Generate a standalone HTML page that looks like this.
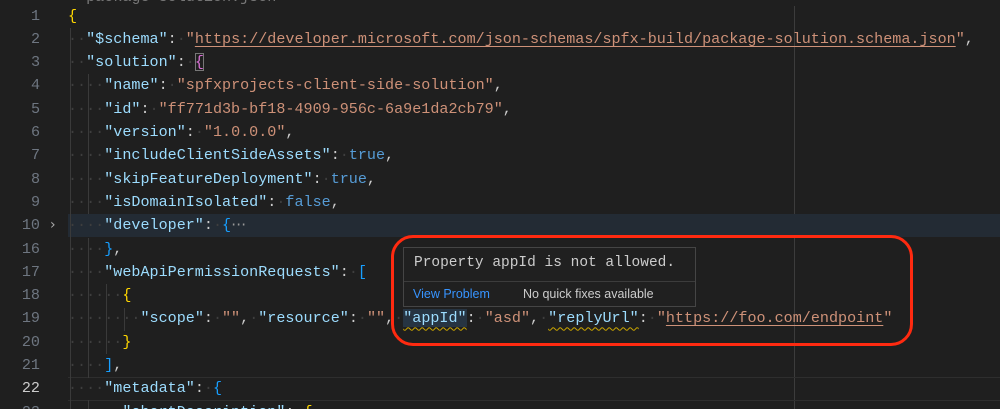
<!DOCTYPE html>
<html><head><meta charset="utf-8"><style>
html,body{margin:0;padding:0;background:#1f1f1f;width:1000px;height:409px;overflow:hidden}
body{position:relative;font-family:"Liberation Mono",monospace;font-size:15.1px}
.r{position:absolute;left:0;width:1000px;height:23.3px;line-height:23.3px}
.n{position:absolute;left:0;width:40px;text-align:right;color:#6e7681}
.c{position:absolute;left:68px;white-space:pre;color:#cccccc}
.k{color:#9cdcfe}.s{color:#ce9178}.b{color:#569cd6}
.g{color:#ffd700}.m{color:#da70d6}.bl{color:#179fff}
.w{color:#3e3e3e}
.u{text-decoration:underline;text-decoration-color:#ce9178;text-underline-offset:3px}
.sq{text-decoration:underline wavy #cca700;text-underline-offset:4px;text-decoration-thickness:1px}
.guide{position:absolute;width:1px;background:#3a3a3a}
</style></head><body>
<div class="r" style="top:-14px"><span class="c" style="color:#777">  package-solution.json</span></div>
<div style="position:absolute;left:794px;top:6px;width:1px;height:403px;background:#3c3c3c"></div>
<div style="position:absolute;left:68px;top:214px;width:932px;height:23.3px;background:#232b34"></div>
<div style="position:absolute;left:68px;top:377px;width:932px;height:22px;border-top:1px solid #2e2e2e;border-bottom:1px solid #2e2e2e"></div>
<div class="guide" style="left:70px;top:28px;height:381px"></div>
<div class="guide" style="left:88px;top:74px;height:140px"></div>
<div class="guide" style="left:88px;top:238px;height:140px"></div>
<div class="guide" style="left:88px;top:400px;height:9px"></div>
<div class="guide" style="left:106px;top:284px;height:70px"></div>
<div class="guide" style="left:124px;top:308px;height:23px"></div>

<div class="r" style="top:4.5px"><span class="n">1</span><span class="c"><span class="g">{</span></span></div>
<div class="r" style="top:27.8px"><span class="n">2</span><span class="c"><span class="w">··</span><span class="k">"$schema"</span>:<span class="w">·</span><span class="s">"<span class="u">https://developer.microsoft.com/json-schemas/spfx-build/package-solution.schema.json</span>"</span>,</span></div>
<div class="r" style="top:51.1px"><span class="n">3</span><span class="c"><span class="w">··</span><span class="k">"solution"</span>:<span class="w">·</span><span class="m" style="outline:1px solid #777;outline-offset:-1px">{</span></span></div>
<div class="r" style="top:74.4px"><span class="n">4</span><span class="c"><span class="w">····</span><span class="k">"name"</span>:<span class="w">·</span><span class="s">"spfxprojects-client-side-solution"</span>,</span></div>
<div class="r" style="top:97.7px"><span class="n">5</span><span class="c"><span class="w">····</span><span class="k">"id"</span>:<span class="w">·</span><span class="s">"ff771d3b-bf18-4909-956c-6a9e1da2cb79"</span>,</span></div>
<div class="r" style="top:121px"><span class="n">6</span><span class="c"><span class="w">····</span><span class="k">"version"</span>:<span class="w">·</span><span class="s">"1.0.0.0"</span>,</span></div>
<div class="r" style="top:144.3px"><span class="n">7</span><span class="c"><span class="w">····</span><span class="k">"includeClientSideAssets"</span>:<span class="w">·</span><span class="b">true</span>,</span></div>
<div class="r" style="top:167.6px"><span class="n">8</span><span class="c"><span class="w">····</span><span class="k">"skipFeatureDeployment"</span>:<span class="w">·</span><span class="b">true</span>,</span></div>
<div class="r" style="top:190.9px"><span class="n">9</span><span class="c"><span class="w">····</span><span class="k">"isDomainIsolated"</span>:<span class="w">·</span><span class="b">false</span>,</span></div>
<div class="r" style="top:214.2px"><span class="n">10</span><span style="position:absolute;left:50px;color:#aaa;font-family:'DejaVu Sans',sans-serif;font-size:14px">›</span><span class="c"><span class="w">····</span><span class="k">"developer"</span>:<span class="w">·</span><span class="bl">{</span><span style="color:#999">⋯</span></span></div>
<div class="r" style="top:237.5px"><span class="n">16</span><span class="c"><span class="w">····</span><span class="bl">}</span>,</span></div>
<div class="r" style="top:260.8px"><span class="n">17</span><span class="c"><span class="w">····</span><span class="k">"webApiPermissionRequests"</span>:<span class="w">·</span><span class="bl">[</span></span></div>
<div class="r" style="top:284.1px"><span class="n">18</span><span class="c"><span class="w">······</span><span class="g">{</span></span></div>
<div class="r" style="top:307.4px"><span class="n">19</span><span class="c"><span class="w">········</span><span class="k">"scope"</span>:<span class="w">·</span><span class="s">""</span>,<span class="w">·</span><span class="k">"resource"</span>:<span class="w">·</span><span class="s">""</span>,<span class="w">·</span><span class="k sq" style="background:#263442">"appId"</span>:<span class="w">·</span><span class="s">"asd"</span>,<span class="w">·</span><span class="k sq">"replyUrl"</span>:<span class="w">·</span><span class="s">"<span class="u">https://foo.com/endpoint</span>"</span></span></div>
<div class="r" style="top:330.7px"><span class="n">20</span><span class="c"><span class="w">······</span><span class="g">}</span></span></div>
<div class="r" style="top:354px"><span class="n">21</span><span class="c"><span class="w">····</span><span class="bl">]</span>,</span></div>
<div class="r" style="top:377.3px"><span class="n" style="color:#cccccc">22</span><span class="c"><span class="w">····</span><span class="k">"metadata"</span>:<span class="w">·</span><span class="bl">{</span></span></div>
<div class="r" style="top:400.6px"><span class="n">23</span><span class="c"><span class="w">······</span><span class="k">"shortDescription"</span>:<span class="w">·</span><span class="g">{</span></span></div>

<div style="position:absolute;left:403px;top:247px;width:293px;height:60px;background:#202020;border:1px solid #454545;box-sizing:border-box">
 <div style="position:absolute;left:10px;top:7px;color:#cccccc;font-size:14.5px;white-space:pre">Property appId is not allowed.</div>
 <div style="position:absolute;left:0;right:0;top:33px;height:1px;background:#3c3c3c"></div>
 <div style="position:absolute;left:9px;top:39px;font-family:'Liberation Sans',sans-serif;font-size:12.5px;color:#3794ff">View Problem</div>
 <div style="position:absolute;left:119px;top:39px;font-family:'Liberation Sans',sans-serif;font-size:12.5px;color:#cccccc">No quick fixes available</div>
</div>
<div style="position:absolute;left:391px;top:235px;width:522px;height:111px;border:3px solid #ff2a10;border-radius:22px;box-sizing:border-box"></div>
</body></html>
